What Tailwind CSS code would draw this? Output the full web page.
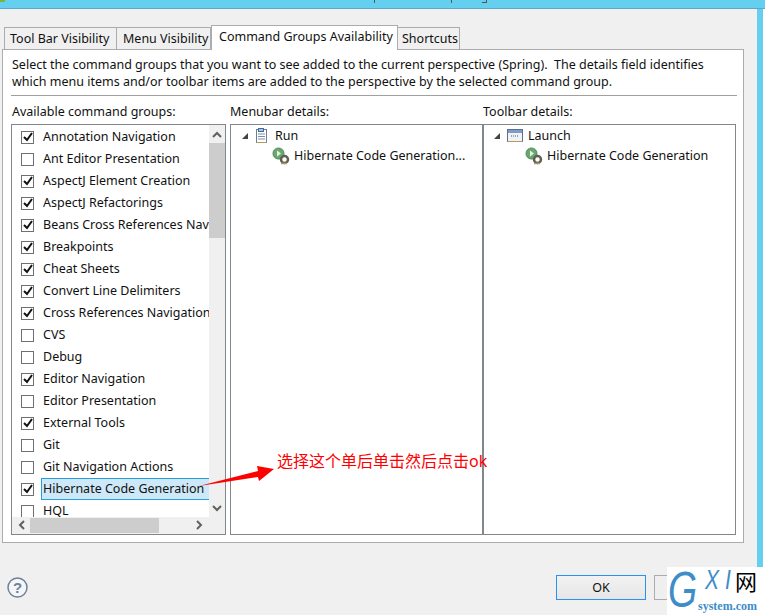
<!DOCTYPE html>
<html>
<head>
<meta charset="utf-8">
<title>Command Groups Availability</title>
<script src="https://cdn.jsdelivr.net/npm/@tailwindcss/browser@4"></script>
</head>
<body class="bg-white">
<div class="relative w-[765px] h-[615px] overflow-hidden font-['Noto_Sans','Noto_Sans_CJK_SC',sans-serif] text-[12.5px] leading-[18px] text-[#111]">
	<!-- window title bar, only the bottom of it is in frame -->
	<div class="relative h-[9px] bg-[#65cff0] border-b border-[#5aa9c9]">
		<div class="absolute left-0 top-0 w-[5px] h-[2px] bg-[#7db53a]"></div>
		<div class="absolute left-[374px] top-0 w-px h-[3px] bg-[#555]"></div>
		<div class="absolute left-[451px] top-0 w-px h-[3px] bg-[#555]"></div>
		<div class="absolute left-[482px] top-0 w-[5px] h-[3px] border-b border-r border-[#555]"></div>
	</div>
	<div class="flex h-[606px]">
		<div class="w-[757px] bg-[#f0f0f0] pt-[16px]">
			<!-- tabs -->
			<div class="flex items-end h-[24px] pl-[4px]">
				<div class="w-[113px] h-[22px] bg-[#f0f0f0] border border-b-0 border-[#acacac] pl-[5px] leading-[22px] whitespace-nowrap">Tool Bar Visibility</div>
				<div class="w-[94px] h-[22px] bg-[#f0f0f0] border border-b-0 border-l-0 border-[#acacac] pl-[6px] leading-[22px] whitespace-nowrap">Menu Visibility</div>
				<div class="relative z-10 w-[187px] h-[25px] -mb-px bg-white border border-b-0 border-[#acacac] pl-[7px] leading-[22px] whitespace-nowrap">Command Groups Availability</div>
				<div class="w-[62px] h-[22px] bg-[#f0f0f0] border border-b-0 border-l-0 border-[#acacac] pl-[4px] leading-[22px] whitespace-nowrap">Shortcuts</div>
			</div>
			<!-- tab body -->
			<div class="ml-[2px] w-[742px] h-[494px] bg-white border border-[#acacac] pl-[8px] pr-[6px] pt-[6px]">
				<p class="h-[17px] leading-[17px] pl-px whitespace-nowrap">Select the command groups that you want to see added to the current perspective (Spring).&nbsp; The details field identifies</p>
				<p class="h-[17px] leading-[17px] pl-px whitespace-nowrap">which menu items and/or toolbar items are added to the perspective by the selected command group.</p>
				<div class="mt-[5px] h-px bg-[#a0a0a0]"></div>
				<div class="flex h-[28px] items-center pt-[3px]">
					<span class="w-[219px] pl-px">Available command groups:</span>
					<span class="w-[253px]">Menubar details:</span>
					<span>Toolbar details:</span>
				</div>
				<div class="flex h-[411px]">
					<!-- list -->
					<div class="relative w-[215px] border border-[#82878c] bg-[#f0f0f0] overflow-hidden">
						<div class="absolute left-0 top-0 w-[197px] h-[392px] bg-white overflow-hidden">
							<div class="flex flex-col pt-px">
								<label class="flex items-center h-[22px] pl-[9px] whitespace-nowrap"><span class="w-[13px] h-[13px] border border-[#707070] bg-white flex items-center justify-center shrink-0"><svg width="10" height="10" viewBox="0 0 10 10"><path d="M1 5l3 3 5-7" fill="none" stroke="#111" stroke-width="2"/></svg></span><span class="ml-[9px]">Annotation Navigation</span></label>
								<label class="flex items-center h-[22px] pl-[9px] whitespace-nowrap"><span class="w-[13px] h-[13px] border border-[#707070] bg-white shrink-0"></span><span class="ml-[9px]">Ant Editor Presentation</span></label>
								<label class="flex items-center h-[22px] pl-[9px] whitespace-nowrap"><span class="w-[13px] h-[13px] border border-[#707070] bg-white flex items-center justify-center shrink-0"><svg width="10" height="10" viewBox="0 0 10 10"><path d="M1 5l3 3 5-7" fill="none" stroke="#111" stroke-width="2"/></svg></span><span class="ml-[9px]">AspectJ Element Creation</span></label>
								<label class="flex items-center h-[22px] pl-[9px] whitespace-nowrap"><span class="w-[13px] h-[13px] border border-[#707070] bg-white flex items-center justify-center shrink-0"><svg width="10" height="10" viewBox="0 0 10 10"><path d="M1 5l3 3 5-7" fill="none" stroke="#111" stroke-width="2"/></svg></span><span class="ml-[9px]">AspectJ Refactorings</span></label>
								<label class="flex items-center h-[22px] pl-[9px] whitespace-nowrap"><span class="w-[13px] h-[13px] border border-[#707070] bg-white flex items-center justify-center shrink-0"><svg width="10" height="10" viewBox="0 0 10 10"><path d="M1 5l3 3 5-7" fill="none" stroke="#111" stroke-width="2"/></svg></span><span class="ml-[9px]">Beans Cross References Navigator</span></label>
								<label class="flex items-center h-[22px] pl-[9px] whitespace-nowrap"><span class="w-[13px] h-[13px] border border-[#707070] bg-white flex items-center justify-center shrink-0"><svg width="10" height="10" viewBox="0 0 10 10"><path d="M1 5l3 3 5-7" fill="none" stroke="#111" stroke-width="2"/></svg></span><span class="ml-[9px]">Breakpoints</span></label>
								<label class="flex items-center h-[22px] pl-[9px] whitespace-nowrap"><span class="w-[13px] h-[13px] border border-[#707070] bg-white flex items-center justify-center shrink-0"><svg width="10" height="10" viewBox="0 0 10 10"><path d="M1 5l3 3 5-7" fill="none" stroke="#111" stroke-width="2"/></svg></span><span class="ml-[9px]">Cheat Sheets</span></label>
								<label class="flex items-center h-[22px] pl-[9px] whitespace-nowrap"><span class="w-[13px] h-[13px] border border-[#707070] bg-white flex items-center justify-center shrink-0"><svg width="10" height="10" viewBox="0 0 10 10"><path d="M1 5l3 3 5-7" fill="none" stroke="#111" stroke-width="2"/></svg></span><span class="ml-[9px]">Convert Line Delimiters</span></label>
								<label class="flex items-center h-[22px] pl-[9px] whitespace-nowrap"><span class="w-[13px] h-[13px] border border-[#707070] bg-white flex items-center justify-center shrink-0"><svg width="10" height="10" viewBox="0 0 10 10"><path d="M1 5l3 3 5-7" fill="none" stroke="#111" stroke-width="2"/></svg></span><span class="ml-[9px]">Cross References Navigation</span></label>
								<label class="flex items-center h-[22px] pl-[9px] whitespace-nowrap"><span class="w-[13px] h-[13px] border border-[#707070] bg-white shrink-0"></span><span class="ml-[9px]">CVS</span></label>
								<label class="flex items-center h-[22px] pl-[9px] whitespace-nowrap"><span class="w-[13px] h-[13px] border border-[#707070] bg-white shrink-0"></span><span class="ml-[9px]">Debug</span></label>
								<label class="flex items-center h-[22px] pl-[9px] whitespace-nowrap"><span class="w-[13px] h-[13px] border border-[#707070] bg-white flex items-center justify-center shrink-0"><svg width="10" height="10" viewBox="0 0 10 10"><path d="M1 5l3 3 5-7" fill="none" stroke="#111" stroke-width="2"/></svg></span><span class="ml-[9px]">Editor Navigation</span></label>
								<label class="flex items-center h-[22px] pl-[9px] whitespace-nowrap"><span class="w-[13px] h-[13px] border border-[#707070] bg-white shrink-0"></span><span class="ml-[9px]">Editor Presentation</span></label>
								<label class="flex items-center h-[22px] pl-[9px] whitespace-nowrap"><span class="w-[13px] h-[13px] border border-[#707070] bg-white flex items-center justify-center shrink-0"><svg width="10" height="10" viewBox="0 0 10 10"><path d="M1 5l3 3 5-7" fill="none" stroke="#111" stroke-width="2"/></svg></span><span class="ml-[9px]">External Tools</span></label>
								<label class="flex items-center h-[22px] pl-[9px] whitespace-nowrap"><span class="w-[13px] h-[13px] border border-[#707070] bg-white shrink-0"></span><span class="ml-[9px]">Git</span></label>
								<label class="flex items-center h-[22px] pl-[9px] whitespace-nowrap"><span class="w-[13px] h-[13px] border border-[#707070] bg-white shrink-0"></span><span class="ml-[9px]">Git Navigation Actions</span></label>
								<label class="flex items-center h-[22px] pl-[9px] whitespace-nowrap"><span class="w-[13px] h-[13px] border border-[#707070] bg-white flex items-center justify-center shrink-0"><svg width="10" height="10" viewBox="0 0 10 10"><path d="M1 5l3 3 5-7" fill="none" stroke="#111" stroke-width="2"/></svg></span><span class="ml-[7px] pl-px w-[168px] h-[22px] leading-[20px] bg-[#cde8f8] border border-r-0 border-[#26a0da] overflow-hidden">Hibernate Code Generation</span></label>
								<label class="flex items-center h-[22px] pl-[9px] whitespace-nowrap"><span class="w-[13px] h-[13px] border border-[#707070] bg-white shrink-0"></span><span class="ml-[9px]">HQL</span></label>
							</div>
						</div>
						<!-- vertical scrollbar -->
						<div class="absolute left-[197px] top-0 w-[16px] h-[392px] flex flex-col items-center">
							<svg class="mt-[6px]" width="10" height="7" viewBox="0 0 10 7"><path d="M1 6l4-4 4 4" fill="none" stroke="#606060" stroke-width="2"/></svg>
							<div class="mt-[5px] w-[16px] h-[95px] bg-[#cdcdcd]"></div>
							<svg class="mt-auto mb-[5px]" width="10" height="7" viewBox="0 0 10 7"><path d="M1 1l4 4 4-4" fill="none" stroke="#606060" stroke-width="2"/></svg>
						</div>
						<!-- horizontal scrollbar -->
						<div class="absolute left-0 top-[392px] w-[197px] h-[16px] flex items-center">
							<svg class="ml-[6px]" width="7" height="10" viewBox="0 0 7 10"><path d="M6 1L2 5l4 4" fill="none" stroke="#606060" stroke-width="2"/></svg>
							<div class="ml-[5px] w-[129px] h-[15px] bg-[#cdcdcd]"></div>
							<svg class="ml-auto mr-[6px]" width="7" height="10" viewBox="0 0 7 10"><path d="M1 1l4 4-4 4" fill="none" stroke="#606060" stroke-width="2"/></svg>
						</div>
					</div>
					<!-- menubar tree -->
					<div class="ml-[4px] w-[253px] border border-[#82878c] bg-white pt-px">
						<div class="flex items-center h-[20px] pl-[10px]">
							<svg width="8" height="8" viewBox="0 0 8 8"><path d="M7 1v6H1z" fill="#444"/></svg>
							<svg class="ml-[6px]" width="14" height="16" viewBox="0 0 14 16"><rect x="1.500" y="1.500" width="10" height="13" fill="#fff" stroke="#6a7f9e"/><rect x="3.500" y="0.500" width="5" height="3" fill="#a9c4e6" stroke="#4a6a96"/><path d="M3 6h7M3 8.500h7M3 11h7" stroke="#7a8ca5"/><path d="M1.500 14.500h10" stroke="#b59a5a"/></svg>
							<span class="ml-[6px]">Run</span>
						</div>
						<div class="flex items-center h-[20px] pl-[41px] whitespace-nowrap">
							<svg width="18" height="18" viewBox="0 0 18 18"><circle cx="6.500" cy="6.500" r="5.500" fill="#6aa86f" stroke="#4a8a55"/><path d="M5 3.500l4 3-4 3z" fill="#e8f5e0"/><circle cx="12.500" cy="12.500" r="3.500" fill="none" stroke="#5f6052" stroke-width="2.500"/><circle cx="12.500" cy="12.500" r="1" fill="#fff"/><path d="M9 16.500h6" stroke="#a89c6a" stroke-width="1.500"/></svg>
							<span class="ml-[4px]">Hibernate Code Generation...</span>
						</div>
					</div>
					<!-- toolbar tree -->
					<div class="w-[253px] border border-l border-[#82878c] bg-white pt-px">
						<div class="flex items-center h-[20px] pl-[9px]">
							<svg width="8" height="8" viewBox="0 0 8 8"><path d="M7 1v6H1z" fill="#444"/></svg>
							<svg class="ml-[6px]" width="16" height="14" viewBox="0 0 16 14"><rect x="0.500" y="0.500" width="15" height="12" fill="#eef3fa" stroke="#5a6f92"/><rect x="1" y="1" width="14" height="3" fill="#7f9cc8"/><path d="M4 7h8" stroke="#555" stroke-dasharray="1 1"/><path d="M0.500 12.500h15" stroke="#b59a5a"/></svg>
							<span class="ml-[5px]">Launch</span>
						</div>
						<div class="flex items-center h-[20px] pl-[41px] whitespace-nowrap">
							<svg width="18" height="18" viewBox="0 0 18 18"><circle cx="6.500" cy="6.500" r="5.500" fill="#6aa86f" stroke="#4a8a55"/><path d="M5 3.500l4 3-4 3z" fill="#e8f5e0"/><circle cx="12.500" cy="12.500" r="3.500" fill="none" stroke="#5f6052" stroke-width="2.500"/><circle cx="12.500" cy="12.500" r="1" fill="#fff"/><path d="M9 16.500h6" stroke="#a89c6a" stroke-width="1.500"/></svg>
							<span class="ml-[4px]">Hibernate Code Generation</span>
						</div>
					</div>
				</div>
			</div>
			<!-- bottom bar -->
			<div class="flex items-center mt-[32px] pl-[7px]">
				<svg width="21" height="21" viewBox="0 0 21 21"><circle cx="10.500" cy="10.500" r="9.500" fill="#f4f6f9" stroke="#6f8296" stroke-width="1.500"/><text x="10.500" y="15.500" text-anchor="middle" font-family="Liberation Sans" font-size="15" font-weight="700" fill="#6f8296">?</text></svg>
				<div class="ml-[528px] w-[90px] h-[25px] border border-[#2b90ef] bg-gradient-to-b from-[#f2f2f2] to-[#e6e6e6] text-center leading-[23px]">OK</div>
				<div class="ml-[8px] w-[90px] h-[25px] border border-[#acacac] bg-[#efefef]"></div>
			</div>
		</div>
		<div class="w-[6px] bg-[#65cff0]"></div>
		<div class="w-[2px] bg-white"></div>
	</div>

	<!-- annotation over the dialog -->
	<svg class="absolute left-[198px] top-[460px]" width="80" height="34" viewBox="0 0 80 34"><path d="M1 26L60 11l-1-5 17 3-15 12-1-4z" fill="#f00"/></svg>
	<span class="absolute left-[277px] top-[451px] text-[#f00] text-[16px] whitespace-nowrap leading-[20px]">选择这个单后单击然后点击ok</span>

	<!-- watermark -->
	<div class="absolute left-[667px] top-[567px] w-[98px] h-[48px] bg-white">
		<span class="absolute left-[1px] top-[-2px] origin-left scale-x-75 text-[#3e8cc8] text-[50px] leading-[50px] italic font-['Liberation_Sans']">G</span>
		<span class="absolute left-[38px] top-[-3px] origin-left scale-x-75 text-[#3e8cc8] text-[28px] leading-[32px] italic font-['Liberation_Sans'] tracking-[8px]">XI</span>
		<span class="absolute left-[68px] top-[-1px] text-black text-[22px] leading-[28px] font-['Noto_Sans_CJK_SC']">网</span>
		<span class="absolute left-[31px] top-[32px] text-[#3e8cc8] text-[12px] leading-[15px] font-bold font-['Liberation_Serif']">system.com</span>
	</div>
</div>
</body>
</html>
